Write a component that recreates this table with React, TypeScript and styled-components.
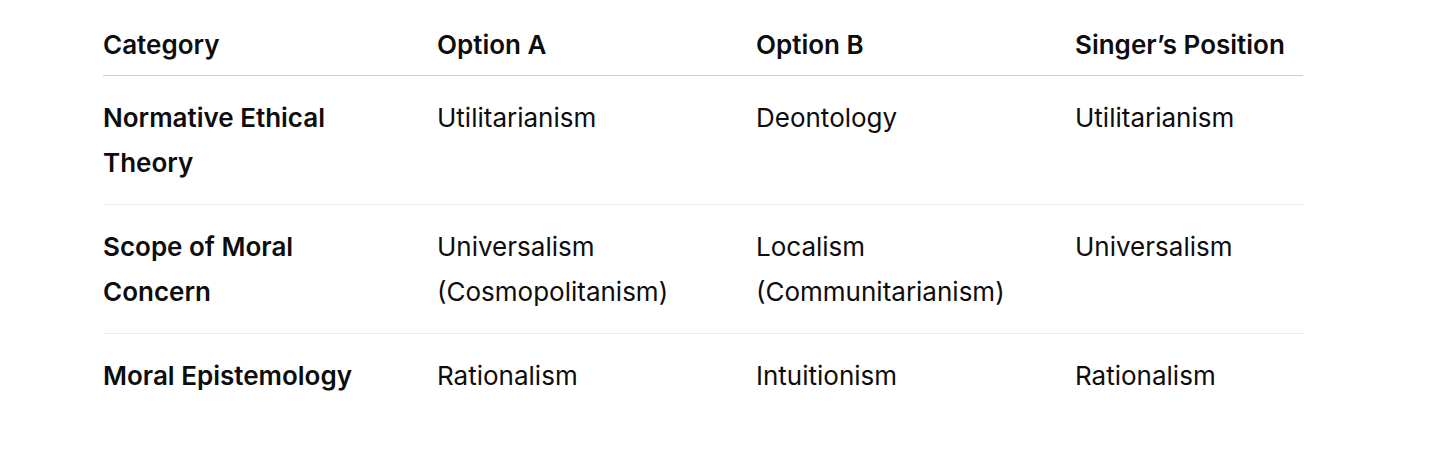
import React from "react";
import styled, { createGlobalStyle } from "styled-components";

const Global = createGlobalStyle`
  html, body { margin: 0; padding: 0; background: #ffffff; }
  body { font-family: Inter, "Noto Sans", sans-serif; color: #0d0d0d; }
`;

const Page = styled.div`
  padding: 22px 0 0 103px;
`;

const Table = styled.table`
  border-collapse: collapse;
  width: 1200px;
  table-layout: fixed;
  font-size: 26px;
  line-height: 45px;
`;

const HeadCell = styled.th<{ $w: number }>`
  box-sizing: border-box;
  width: ${(p) => p.$w}px;
  text-align: left;
  font-weight: 600;
  padding: 0 56px 8px 0;
  border-bottom: 1.5px solid #cfcfcf;
  vertical-align: top;
  white-space: nowrap;
  &:last-child { padding-right: 0; }
`;

const Row = styled.tr<{ $last?: boolean }>`
  border-bottom: ${(p) => (p.$last ? "none" : "1px solid #ececec")};
`;

const Cell = styled.td<{ $bold?: boolean }>`
  box-sizing: border-box;
  padding: 19px 56px 19px 0;
  vertical-align: top;
  font-weight: ${(p) => (p.$bold ? 600 : 400)};
  &:last-child { padding-right: 0; }
`;

const cols = [
  { label: "Category", w: 334 },
  { label: "Option A", w: 319 },
  { label: "Option B", w: 319 },
  { label: "Singer’s Position", w: 228 },
];

const rows = [
  ["Normative Ethical Theory", "Utilitarianism", "Deontology", "Utilitarianism"],
  ["Scope of Moral Concern", "Universalism (Cosmopolitanism)", "Localism (Communitarianism)", "Universalism"],
  ["Moral Epistemology", "Rationalism", "Intuitionism", "Rationalism"],
];

export default function App() {
  return (
    <>
      <Global />
      <Page>
        <Table>
          <thead>
            <tr>
              {cols.map((c) => (
                <HeadCell key={c.label} $w={c.w}>
                  {c.label}
                </HeadCell>
              ))}
            </tr>
          </thead>
          <tbody>
            {rows.map((r, i) => (
              <Row key={i} $last={i === rows.length - 1}>
                {r.map((v, j) => (
                  <Cell key={j} $bold={j === 0}>
                    {v}
                  </Cell>
                ))}
              </Row>
            ))}
          </tbody>
        </Table>
      </Page>
    </>
  );
}
